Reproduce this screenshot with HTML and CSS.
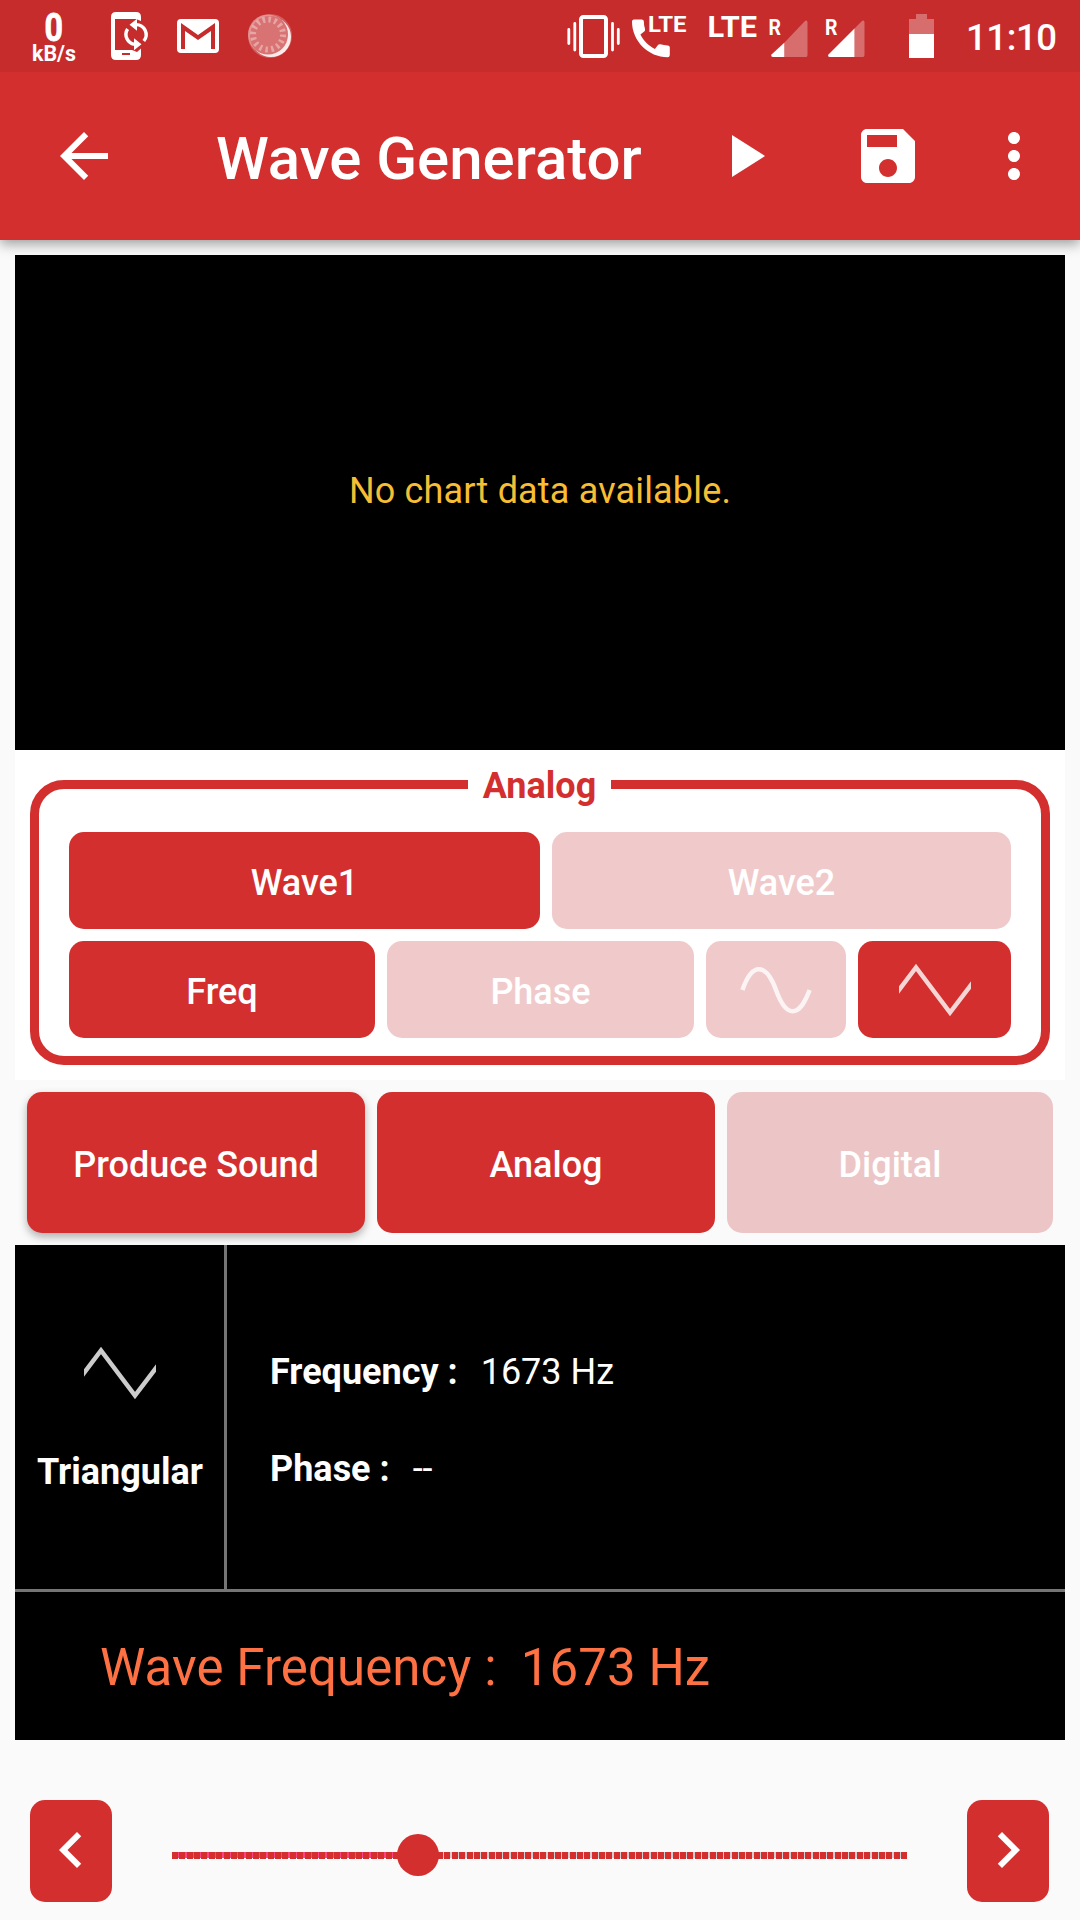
FILE: index.html
```html
<!DOCTYPE html>
<html lang="en">
<head>
<meta charset="utf-8">
<title>Wave Generator</title>
<link rel="stylesheet" href="styles.css">
</head>
<body>
<header class="status">
  <svg width="1080" height="72" viewBox="0 0 1080 72" fill="#fff">
    <g class="status-text">
      <text class="rate" x="44.500" y="41" font-size="38" textLength="18.500" lengthAdjust="spacingAndGlyphs">0</text>
      <text x="32" y="61" font-size="21.5" textLength="44" lengthAdjust="spacingAndGlyphs">kB/s</text>
    </g>
    <!-- phone sync -->
    <path d="M116 12H136Q141 12 141 17V21L136 19H115V50H132L137 52 141 48.500V55Q141 60 136 60H116Q111 60 111 55V17Q111 12 116 12Z"/>
    <path d="M122 53H130V55H122Z" fill="#c62c2c"/>
    <path d="M136 24.600A10 10 0 0 1 143.800 41M127.600 29A10 10 0 0 0 135 44.400" fill="none" stroke="#fff" stroke-width="3.400"/>
    <path d="M129.500 24.700 137 18.700V30.700ZM141.500 44.300 134 38.300V50.300Z"/>
    <!-- mail -->
    <path fill-rule="evenodd" d="M181 19H215Q219 19 219 23V49Q219 53 215 53H181Q177 53 177 49V23Q177 19 181 19ZM181 23V49H185V31L198 40 211 31V49H215V23L198 35Z"/>
    <!-- spinner badge -->
    <circle cx="271" cy="37" r="20" fill-opacity=".9"/>
    <circle cx="268" cy="34.500" r="20" fill="#d97272"/>
    <circle cx="268" cy="34.500" r="15" fill="none" stroke="#fff" stroke-opacity=".36" stroke-width="6" stroke-dasharray="2.500 3.390"/>
    <circle cx="270" cy="36" r="21" fill="none" stroke="#fff" stroke-opacity=".24" stroke-width="2"/>
    <!-- vibrate -->
    <rect x="581" y="17" width="25" height="39" rx="2.500" fill="none" stroke="#fff" stroke-width="4"/>
    <path d="M568.800 29.500V43.500M574.800 23.500V50M612.500 23.500V50M618.300 29.500V43.500" stroke="#fff" stroke-width="2.800" stroke-linecap="round"/>
    <!-- call -->
    <path transform="translate(625.700 13.200) scale(2.100)" d="M20.010 15.380c-1.230 0-2.420-.2-3.530-.56-.35-.12-.74-.03-1.010.24l-1.570 1.970c-2.830-1.350-5.480-3.900-6.890-6.830l1.950-1.660c.27-.28.35-.67.24-1.020-.37-1.110-.56-2.300-.56-3.530 0-.54-.45-.99-.99-.99H4.190C3.650 3 3 3.240 3 3.990 3 13.280 10.730 21 20.010 21c.71 0 .99-.63.99-1.180v-3.450c0-.54-.45-.99-.99-.99z"/>
    <g class="status-text">
      <text x="648" y="32" font-size="22.500" textLength="38.500" lengthAdjust="spacingAndGlyphs">LTE</text>
      <text x="707.500" y="37" font-size="29" textLength="49.500" lengthAdjust="spacingAndGlyphs">LTE</text>
      <text x="768.500" y="35" font-size="22.500" textLength="12.500" lengthAdjust="spacingAndGlyphs">R</text>
      <text x="825" y="35" font-size="22.500" textLength="12.500" lengthAdjust="spacingAndGlyphs">R</text>
    </g>
    <!-- signal -->
    <path fill-opacity=".31" d="M784.300 42.800V57H806Q807.500 57 807.500 55V22Q806.500 19.500 804.500 21.500Z"/>
    <path d="M784.300 42.800V57H773Q770.500 56.500 771.500 54.500Z"/>
    <path fill-opacity=".31" d="M854.500 28.600V57H863Q864.500 57 864.500 55V22Q863.500 19.500 861.500 21.500Z"/>
    <path d="M854.500 28.600V57H830Q827 56.500 828.500 54.500Z"/>
    <!-- battery -->
    <path fill-opacity=".31" d="M916 14H927V19H934V34H909V19H916Z"/>
    <path d="M909 34H934V58H909Z"/>
    <text class="clock" x="966" y="50" font-size="36.500" textLength="91" lengthAdjust="spacing">11:10</text>
  </svg>
</header>
<nav class="appbar">
  <svg class="icon" viewBox="0 0 24 24"><path d="M20 11H7.830l5.590-5.590L12 4l-8 8 8 8 1.410-1.410L7.830 13H20v-2z"/></svg>
  <h1 class="title">Wave Generator</h1>
  <svg class="icon play" viewBox="0 0 24 24"><path d="M8 5v14l11-7z"/></svg>
  <svg class="icon save" viewBox="0 0 24 24"><path d="M17 3H5c-1.110 0-2 .9-2 2v14c0 1.100.89 2 2 2h14c1.100 0 2-.9 2-2V7l-4-4zm-5 16c-1.660 0-3-1.340-3-3s1.340-3 3-3 3 1.340 3 3-1.340 3-3 3zm3-10H5V5h10v4z"/></svg>
  <svg class="icon more" viewBox="0 0 24 24"><path d="M12 8c1.100 0 2-.9 2-2s-.9-2-2-2-2 .9-2 2 .9 2 2 2zm0 2c-1.100 0-2 .9-2 2s.9 2 2 2 2-.9 2-2-.9-2-2-2zm0 6c-1.100 0-2 .9-2 2s.9 2 2 2 2-.9 2-2-.9-2-2-2z"/></svg>
</nav>
<main class="content">
  <section class="chart">No chart data available.</section>
  <section class="analog">
    <fieldset class="group">
      <legend class="legend">Analog</legend>
      <div class="grid waves">
        <button class="btn">Wave1</button>
        <button class="btn off">Wave2</button>
      </div>
      <div class="grid props">
        <button class="btn">Freq</button>
        <button class="btn off">Phase</button>
        <button class="btn off shape"><svg class="wave" viewBox="0 0 72 72"><path d="M2.400 36C7 23 12 15.300 18.800 15.300C27 15.300 32 25 36 36C40 47 45 57.200 52.500 57.200C60 57.200 65 48 69.600 36"/></svg></button>
        <button class="btn shape"><svg class="wave" viewBox="0 0 72 72"><path d="M-5 42.600 17 13.500 51 58.500 77 24.500"/></svg></button>
      </div>
    </fieldset>
  </section>
  <section class="modes">
    <button class="btn raised">Produce Sound</button>
    <button class="btn">Analog</button>
    <button class="btn off-mode">Digital</button>
  </section>
  <section class="info">
    <div class="details">
      <div class="kind">
        <svg class="wave" viewBox="0 0 72 72"><path d="M-5 42.600 17 13.500 51 58.500 77 24.500"/></svg>
        <b class="kind-name">Triangular</b>
      </div>
      <div class="values">
        <div class="value"><b>Frequency :</b><span>1673 Hz</span></div>
        <div class="value"><b>Phase :</b><span>--</span></div>
      </div>
    </div>
    <div class="summary"><span>Wave Frequency :</span><span>1673 Hz</span></div>
  </section>
</main>
<footer class="seek">
  <button class="btn step"><svg class="icon" viewBox="0 0 24 24"><path d="M15.410 7.410L14 6l-6 6 6 6 1.410-1.410L10.830 12z"/></svg></button>
  <svg class="slider" width="735" height="42" viewBox="0 0 735 42">
    <path class="track-on" d="M0 21H246"/>
    <path class="track-off" d="M246 21H735"/>
    <path class="ticks" d="M0 21.500H735"/>
    <circle cx="246" cy="21" r="21"/>
  </svg>
  <button class="btn step"><svg class="icon" viewBox="0 0 24 24"><path d="M10 6L8.590 7.410 13.170 12l-4.580 4.590L10 18l6-6z"/></svg></button>
</footer>
</body>
</html>
```
FILE: styles.css
```css
* { box-sizing: border-box; }
body {
  margin: 0;
  width: 1080px;
  height: 1920px;
  overflow: hidden;
  background: #fafafa;
  color: #fff;
  font: 36px/42px Roboto, sans-serif;
}
svg { display: block; flex: none; }
.status {
  position: relative;
  z-index: 1;
  height: 72px;
  background: #c62c2c;
}
.status-text { font-weight: 700; }
.rate { stroke: #fff; stroke-width: .8; }
.clock { font-weight: 500; }
.appbar {
  display: flex;
  align-items: center;
  height: 168px;
  padding: 0 30px 0 48px;
  background: #d32f2f;
  box-shadow: 0 4px 12px rgba(0, 0, 0, .38);
}
.icon { width: 72px; height: 72px; fill: #fff; }
.title {
  margin: 6px 0 0 96px;
  width: 492px;
  font-size: 60px;
  font-weight: 500;
  line-height: 70px;
  white-space: nowrap;
}
.save { margin-left: 72px; }
.more { margin-left: 54px; }
.content { padding: 15px 15px 0; }
.chart {
  display: flex;
  align-items: center;
  justify-content: center;
  height: 495px;
  padding-bottom: 23px;
  background: #000;
  color: #f7bd33;
  letter-spacing: .17px;
}
.analog { height: 330px; padding: 12px 15px 15px; background: #fff; }
.group {
  height: 303px;
  min-width: 0;
  margin: 0;
  padding: 25px 30px 18px;
  border: 9px solid #d32f2f;
  border-radius: 34px;
}
.legend {
  width: 143px;
  height: 45px;
  margin: 0 auto 0 399px;
  padding: 3px 0 0;
  color: #d32f2f;
  font-weight: 700;
  text-align: center;
}
.grid { display: grid; gap: 12px; height: 97px; }
.waves { grid-template-columns: 471px 459px; margin-bottom: 12px; }
.props { grid-template-columns: 306px 307px 140px 153px; }
.btn {
  display: flex;
  align-items: center;
  justify-content: center;
  padding: 4px 0 0;
  border: 0;
  border-radius: 15px;
  background: #d32f2f;
  color: #fff;
  font: 500 36px/42px Roboto, sans-serif;
}
.off { background: #f0caca; }
.off-mode { background: #ecc6c6; }
.shape, .step { padding: 0; }
.wave {
  width: 72px;
  height: 72px;
  overflow: hidden;
  fill: none;
  stroke: #fff;
  stroke-width: 4.5;
  opacity: .8;
}
.modes {
  display: grid;
  grid-template-columns: 338px 338px 326px;
  gap: 12px;
  height: 165px;
  padding: 12px;
}
.raised { box-shadow: 0 4px 8px rgba(0, 0, 0, .3); }
.info { height: 495px; background: #000; }
.details { display: flex; height: 347px; border-bottom: 3px solid #757575; }
.kind {
  display: flex;
  flex-direction: column;
  align-items: center;
  width: 212px;
  padding-top: 92px;
  border-right: 3px solid #757575;
}
.kind-name { margin: 42px 0 0 1px; }
.values { padding: 106px 0 0 43px; }
.value { display: flex; gap: 23px; height: 97px; }
.summary {
  display: flex;
  gap: 24px;
  padding: 46px 0 0 85px;
  color: #ff7043;
  font-size: 51px;
  line-height: 60px;
  letter-spacing: .08px;
}
.seek {
  display: flex;
  align-items: flex-start;
  justify-content: space-between;
  padding: 60px 31px 0 30px;
}
.step { width: 82px; height: 102px; padding-bottom: 2px; }
.slider { margin-top: 34px; overflow: visible; fill: #d32f2f; }
.slider path { shape-rendering: crispEdges; stroke-width: 6; }
.track-on { stroke: #ff4081; }
.track-off { stroke: #d0d0d0; }
.slider .ticks { stroke: #d32f2f; stroke-width: 7; stroke-dasharray: 6 1.3636; }
```
